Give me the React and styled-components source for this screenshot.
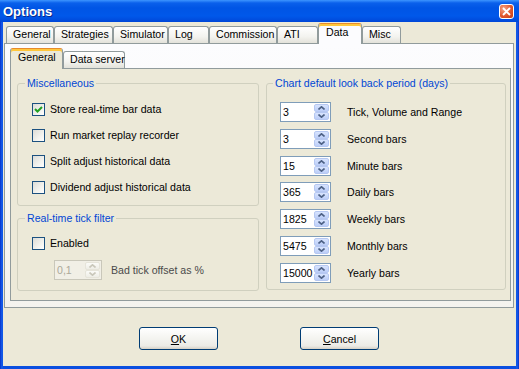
import React from 'react'
import styled, { createGlobalStyle } from 'styled-components'

const GlobalStyle = createGlobalStyle`
  html, body {
    margin: 0;
    padding: 0;
    background: #ECE9D8;
  }
  body {
    font-family: 'Liberation Sans', Arial, sans-serif;
    font-size: 10.6px;
    color: #000;
  }
`

const Window = styled.div`
  width: 519px;
  height: 369px;
  display: flex;
  flex-direction: column;
  background: linear-gradient(90deg, #0831C8 0, #1660EE 2px, #0B4FE0 3px, #0B4FE0 516px, #1660EE 517px, #0831C8 519px);
  overflow: hidden;
`

const TitleBar = styled.div`
  height: 22px;
  flex: none;
  display: flex;
  align-items: center;
  justify-content: space-between;
  padding: 1px 5px 0 3px;
  box-sizing: border-box;
  background: linear-gradient(#3D95FF 0, #0A60EB 3px, #0055E5 8px, #0058EA 16px, #0047D8 22px);
`

const Title = styled.span`
  font: bold 13px 'Liberation Sans', Arial, sans-serif;
  color: #fff;
  text-shadow: 1px 1px 0 #0A2A8C;
`

const CloseButton = styled.span`
  width: 15px;
  height: 15px;
  box-sizing: border-box;
  border: 1px solid #fff;
  border-radius: 3px;
  background: radial-gradient(circle at 30% 30%, #F3A486 0, #E0582E 55%, #C23A14 100%);
  display: flex;
  align-items: center;
  justify-content: center;
`

const Body = styled.div`
  flex: 1;
  margin: 0 3px 3px;
  background: #ECE9D8;
  display: flex;
  flex-direction: column;
  padding: 1px 2px 0 1px;
`

const TabControl = styled.div`
  display: flex;
  flex-direction: column;
  flex: ${(p) => (p.$fill ? 1 : 'none')};
  height: ${(p) => (p.$h ? `${p.$h}px` : 'auto')};
`

const TabStrip = styled.div`
  display: flex;
  align-items: flex-start;
  height: 20px;
  padding-left: ${(p) => p.$pad}px;
`

const Tab = styled.div`
  width: ${(p) => p.$w}px;
  box-sizing: border-box;
  border: 1px solid #919B9C;
  border-bottom: 0;
  border-radius: 3px 3px 0 0;
  line-height: 13px;
  white-space: nowrap;
  ${(p) =>
    p.$active
      ? `
    position: relative;
    z-index: 2;
    height: 21px;
    padding: 2px 0 0 7px;
    border-top-color: #E68B2C;
    box-shadow: inset 0 2px 0 #FFC73C;
    background: ${p.$bg};
  `
      : `
    margin-top: 3px;
    height: 17px;
    padding: 1px 0 0 6px;
    background: linear-gradient(#FFFFFF, #F3F3EF 60%, #E3E2DA);
  `}
`

const TabPanel = styled.div`
  flex: 1;
  box-sizing: border-box;
  border: 1px solid #919B9C;
  background: ${(p) => p.$bg};
  padding: ${(p) => p.$padding};
  display: flex;
  flex-direction: column;
`

const PageGrid = styled.div`
  display: grid;
  grid-template-columns: 242px 240px;
  column-gap: 7px;
  align-items: start;
`

const Column = styled.div`
  display: flex;
  flex-direction: column;
  gap: 6px;
`

const Group = styled.fieldset`
  margin: 0;
  min-width: 0;
  border: 1px solid #D0D0BF;
  border-radius: 3px;
  padding: ${(p) => p.$padding};
  display: flex;
  flex-direction: column;
  gap: ${(p) => p.$gap}px;
`

const Legend = styled.legend`
  margin-left: -7px;
  padding: 0 2px;
  color: #0046D5;
  line-height: 13px;
`

const CheckRow = styled.label`
  display: flex;
  align-items: center;
  gap: 5px;
  height: 13px;
  line-height: 13px;
`

const CheckBox = styled.span`
  width: 13px;
  height: 13px;
  box-sizing: border-box;
  border: 1px solid #1C5180;
  background: linear-gradient(135deg, #DCDCD7 0%, #F2F2EE 60%, #FFFFFF 100%);
  display: flex;
  align-items: center;
  justify-content: center;
  flex: none;
`

const SpinRow = styled.div`
  display: flex;
  align-items: center;
  gap: ${(p) => p.$gap}px;
  margin-left: ${(p) => p.$indent || 0}px;
  height: 20px;
`

const SpinBox = styled.div`
  width: ${(p) => p.$w}px;
  height: 20px;
  box-sizing: border-box;
  border: 1px solid ${(p) => (p.$disabled ? '#C9C7BA' : '#7F9DB9')};
  background: ${(p) => (p.$disabled ? '#F1EFE6' : '#FFFFFF')};
  display: flex;
  flex: none;
`

const SpinValue = styled.span`
  flex: 1;
  padding-left: 2px;
  line-height: 18px;
  color: ${(p) => (p.$disabled ? '#ACA899' : '#000')};
`

const SpinButtons = styled.div`
  width: 15px;
  display: flex;
  flex-direction: column;
  padding: 1px 1px 1px 0;
`

const SpinHalf = styled.div`
  flex: 1;
  box-sizing: border-box;
  border: 1px solid ${(p) => (p.$disabled ? '#E6E4DA' : '#B6C8F2')};
  border-radius: 2px;
  background: ${(p) =>
    p.$disabled
      ? 'linear-gradient(#FBFBF8, #EEEDE6)'
      : 'linear-gradient(#D8E4FE, #BCCEF8)'};
  display: flex;
  align-items: center;
  justify-content: center;
`

const SpinLabel = styled.span`
  color: ${(p) => (p.$disabled ? '#4A4A4A' : '#000')};
  white-space: nowrap;
`

const ButtonRow = styled.div`
  display: flex;
  justify-content: center;
  gap: 82px;
  margin-top: 19px;
`

const Button = styled.button`
  width: 79px;
  height: 23px;
  box-sizing: border-box;
  border: 1px solid #003C74;
  border-radius: 3px;
  background: linear-gradient(#FFFFFF 0%, #F4F4F0 50%, #ECEBE6 85%, #D6D0C5 100%);
  font: 10.6px 'Liberation Sans', Arial, sans-serif;
  color: #000;
  padding: 0;
`

const Chevron = ({ down, disabled }) => (
  <svg width="7" height="4" viewBox="0 0 7 4">
    <path
      d={down ? 'M0.5 0.5 L3.5 3.2 L6.5 0.5' : 'M0.5 3.5 L3.5 0.8 L6.5 3.5'}
      fill="none"
      stroke={disabled ? '#C9C7BA' : '#4D6185'}
      strokeWidth="1.6"
    />
  </svg>
)

const Spin = ({ value, width = 51, disabled }) => (
  <SpinBox $w={width} $disabled={disabled}>
    <SpinValue $disabled={disabled}>{value}</SpinValue>
    <SpinButtons>
      <SpinHalf $disabled={disabled}>
        <Chevron disabled={disabled} />
      </SpinHalf>
      <SpinHalf $disabled={disabled}>
        <Chevron down disabled={disabled} />
      </SpinHalf>
    </SpinButtons>
  </SpinBox>
)

const Check = ({ checked, children }) => (
  <CheckRow>
    <CheckBox>
      {checked && (
        <svg width="9" height="9" viewBox="0 0 9 9">
          <path d="M1 4 L3.5 6.5 L8 2" fill="none" stroke="#21A121" strokeWidth="2" />
        </svg>
      )}
    </CheckBox>
    {children}
  </CheckRow>
)

const outerTabs = [
  { label: 'General', w: 48 },
  { label: 'Strategies', w: 59 },
  { label: 'Simulator', w: 55 },
  { label: 'Log', w: 41 },
  { label: 'Commission', w: 68 },
  { label: 'ATI', w: 41 },
  { label: 'Data', w: 44, active: true },
  { label: 'Misc', w: 39 },
]

const innerTabs = [
  { label: 'General', w: 53, active: true },
  { label: 'Data server', w: 62 },
]

const lookBack = [
  ['3', 'Tick, Volume and Range'],
  ['3', 'Second bars'],
  ['15', 'Minute bars'],
  ['365', 'Daily bars'],
  ['1825', 'Weekly bars'],
  ['5475', 'Monthly bars'],
  ['15000', 'Yearly bars'],
]

const OUTER_BG = 'linear-gradient(#FCFCFE, #F4F3EE)'
const INNER_BG = '#ECE9D8'

const App = () => {
  return (
    <Window>
      <GlobalStyle />
      <TitleBar>
        <Title>Options</Title>
        <CloseButton>
          <svg width="9" height="9" viewBox="0 0 9 9">
            <path d="M1 1 L8 8 M8 1 L1 8" stroke="#fff" strokeWidth="1.8" />
          </svg>
        </CloseButton>
      </TitleBar>
      <Body>
        <TabControl $h={285}>
          <TabStrip $pad={2}>
            {outerTabs.map((t) => (
              <Tab key={t.label} $w={t.w} $active={t.active} $bg="#FCFCFE">
                {t.label}
              </Tab>
            ))}
          </TabStrip>
          <TabPanel $bg={OUTER_BG} $padding="4px 2px 6px 5px">
            <TabControl $fill>
              <TabStrip $pad={0}>
                {innerTabs.map((t) => (
                  <Tab key={t.label} $w={t.w} $active={t.active} $bg={INNER_BG}>
                    {t.label}
                  </Tab>
                ))}
              </TabStrip>
              <TabPanel $bg={INNER_BG} $padding="8px 3px 0 6px">
                <PageGrid>
                  <Column>
                    <Group $padding="13px 10px 11px 14px" $gap={13}>
                      <Legend>Miscellaneous</Legend>
                      <Check checked>Store real-time bar data</Check>
                      <Check>Run market replay recorder</Check>
                      <Check>Split adjust historical data</Check>
                      <Check>Dividend adjust historical data</Check>
                    </Group>
                    <Group $padding="12px 10px 10px 14px" $gap={10}>
                      <Legend>Real-time tick filter</Legend>
                      <Check>Enabled</Check>
                      <SpinRow $gap={9} $indent={22}>
                        <Spin value="0,1" width={48} disabled />
                        <SpinLabel $disabled>Bad tick offset as %</SpinLabel>
                      </SpinRow>
                    </Group>
                  </Column>
                  <Group $padding="12px 10px 6px 13px" $gap={6.8}>
                    <Legend>Chart default look back period (days)</Legend>
                    {lookBack.map(([value, label]) => (
                      <SpinRow key={label} $gap={16}>
                        <Spin value={value} />
                        <SpinLabel>{label}</SpinLabel>
                      </SpinRow>
                    ))}
                  </Group>
                </PageGrid>
              </TabPanel>
            </TabControl>
          </TabPanel>
        </TabControl>
        <ButtonRow>
          <Button>
            <u>O</u>K
          </Button>
          <Button>
            <u>C</u>ancel
          </Button>
        </ButtonRow>
      </Body>
    </Window>
  )
}

export default App
